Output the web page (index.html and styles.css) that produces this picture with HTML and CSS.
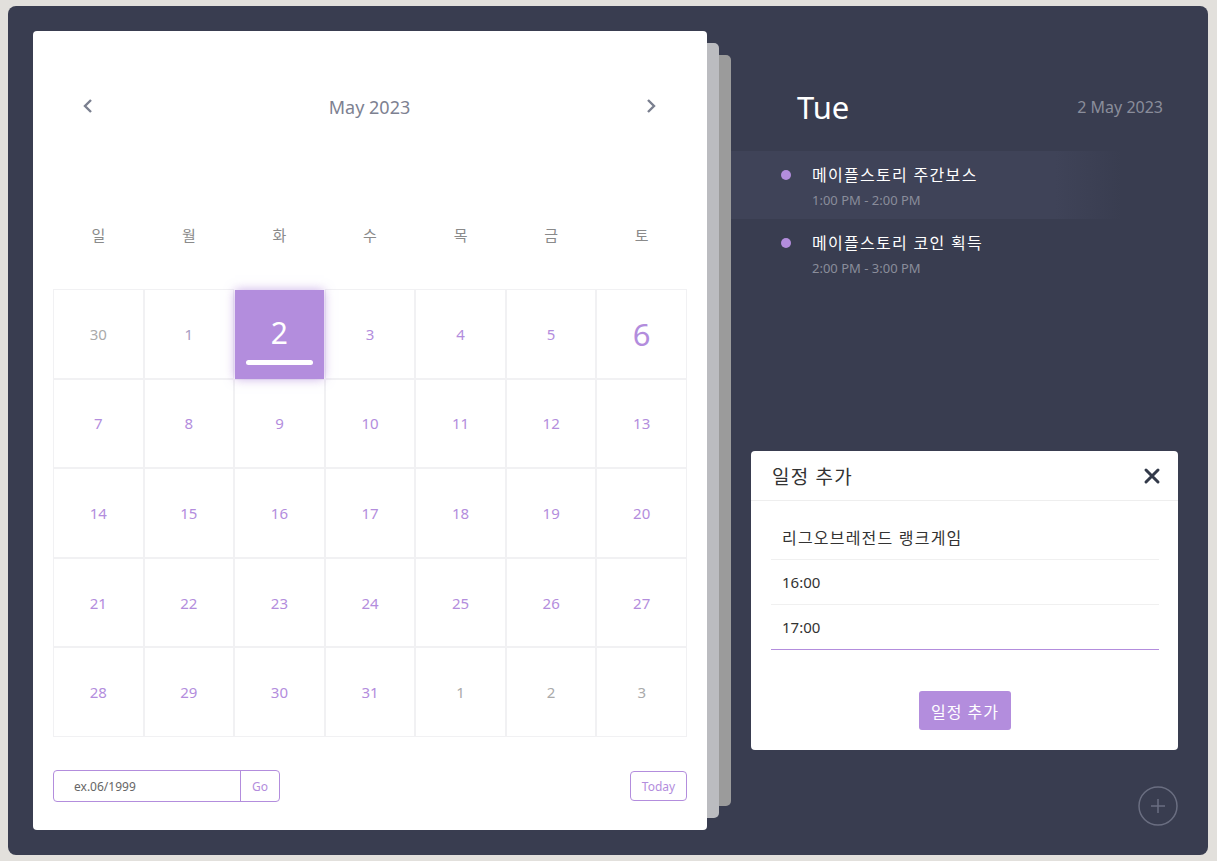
FILE: index.html
```html
<!DOCTYPE html>
<html lang="ko">
<head>
    <meta charset="UTF-8">
    <meta name="viewport" content="width=device-width, initial-scale=1.0">
    <title>Calendar</title>
    <link rel="stylesheet" href="styles.css">
</head>
<body>
    <div class="app">
        <section class="calendar">
            <div class="cal-head">
                <button class="nav-btn">
                    <svg width="12" height="16" viewBox="0 0 12 16"><path d="M9 2 L3 8 L9 14" fill="none" stroke="#7a7f8f" stroke-width="2.4"/></svg>
                </button>
                <div class="month">May 2023</div>
                <button class="nav-btn">
                    <svg width="12" height="16" viewBox="0 0 12 16"><path d="M3 2 L9 8 L3 14" fill="none" stroke="#7a7f8f" stroke-width="2.4"/></svg>
                </button>
            </div>
            <div class="weekdays">
                <span>일</span><span>월</span><span>화</span><span>수</span><span>목</span><span>금</span><span>토</span>
            </div>
            <div class="days">
                <div class="day other">30</div>
                <div class="day first">1</div>
                <div class="day active"><span>2</span><i class="bar"></i></div>
                <div class="day">3</div>
                <div class="day">4</div>
                <div class="day">5</div>
                <div class="day hover">6</div>
                <div class="day">7</div>
                <div class="day">8</div>
                <div class="day">9</div>
                <div class="day">10</div>
                <div class="day">11</div>
                <div class="day">12</div>
                <div class="day">13</div>
                <div class="day">14</div>
                <div class="day">15</div>
                <div class="day">16</div>
                <div class="day">17</div>
                <div class="day">18</div>
                <div class="day">19</div>
                <div class="day">20</div>
                <div class="day">21</div>
                <div class="day">22</div>
                <div class="day">23</div>
                <div class="day">24</div>
                <div class="day">25</div>
                <div class="day">26</div>
                <div class="day">27</div>
                <div class="day">28</div>
                <div class="day">29</div>
                <div class="day">30</div>
                <div class="day">31</div>
                <div class="day other">1</div>
                <div class="day other">2</div>
                <div class="day other">3</div>
            </div>
            <div class="cal-foot">
                <div class="goto">
                    <input type="text" placeholder="ex.06/1999">
                    <button>Go</button>
                </div>
                <button class="today-btn">Today</button>
            </div>
        </section>

        <section class="side">
            <div class="side-head">
                <div class="dayname">Tue</div>
                <div class="fulldate">2 May 2023</div>
            </div>
            <ul class="events">
                <li class="event current">
                    <i class="dot"></i>
                    <div>
                        <div class="ev-title">메이플스토리 주간보스</div>
                        <div class="ev-time">1:00 PM - 2:00 PM</div>
                    </div>
                </li>
                <li class="event">
                    <i class="dot"></i>
                    <div>
                        <div class="ev-title">메이플스토리 코인 획득</div>
                        <div class="ev-time">2:00 PM - 3:00 PM</div>
                    </div>
                </li>
            </ul>

            <div class="modal">
                <div class="modal-head">
                    <span>일정 추가</span>
                    <button class="close">
                        <svg width="18" height="18" viewBox="0 0 18 18"><path d="M3 3 L15 15 M15 3 L3 15" stroke="#333a4a" stroke-width="3" stroke-linecap="round"/></svg>
                    </button>
                </div>
                <div class="modal-body">
                    <div class="field-row"><input class="field title" type="text" value="리그오브레전드 랭크게임"></div>
                    <div class="field-row"><input class="field" type="text" value="16:00"></div>
                    <div class="field-row focus"><input class="field" type="text" value="17:00"></div>
                    <button class="add-btn">일정 추가</button>
                </div>
            </div>

            <button class="fab">
                <svg width="40" height="40" viewBox="0 0 40 40"><circle cx="20" cy="20" r="19" fill="none" stroke="#6a6e81" stroke-width="1.5"/><path d="M20 13 V27 M13 20 H27" stroke="#6a6e81" stroke-width="1.5"/></svg>
            </button>
        </section>
    </div>
</body>
</html>
```

FILE: styles.css
```css
* {
    box-sizing: border-box;
}
body {
    margin: 0;
    padding: 6px 9px 6px 8px;
    background-color: #e2e0dc;
    font-family: "Noto Sans", "Noto Sans CJK KR", sans-serif;
}
button, input {
    font-family: inherit;
}
.app {
    position: relative;
    z-index: 0;
    display: flex;
    height: 849px;
    padding: 25px 0 25px 25px;
    background-color: #393d50;
    border-radius: 8px;
}

/* calendar card, with two pages stacked behind it */
.calendar {
    position: relative;
    width: 674px;
    height: 799px;
    padding: 0 20px;
    background-color: #fff;
    border-radius: 4px;
}
.calendar::before,
.calendar::after {
    content: "";
    position: absolute;
    z-index: -1;
    border-radius: 0 5px 5px 0;
}
.calendar::before {
    top: 24px;
    bottom: 24px;
    right: -24px;
    width: 20px;
    background-color: #9b9b9b;
}
.calendar::after {
    top: 12px;
    bottom: 12px;
    right: -12px;
    width: 20px;
    background-color: #bbbcc0;
}
.cal-head {
    display: flex;
    align-items: center;
    justify-content: space-between;
    height: 24px;
    margin-top: 63px;
    padding: 0 30px 0 29px;
}
.nav-btn {
    border: none;
    background: none;
    padding: 0;
    display: flex;
    cursor: pointer;
}
.month {
    font-size: 18px;
    color: #7d8191;
    margin-top: 2px;
}
.weekdays {
    display: grid;
    grid-template-columns: repeat(7, 1fr);
    margin-top: 105px;
    line-height: 24px;
    text-align: center;
    font-size: 15px;
    color: #8a8a8a;
}
.days {
    display: grid;
    grid-template-columns: repeat(7, 1fr);
    grid-template-rows: repeat(5, 1fr);
    height: 448px;
    margin-top: 42px;
}
.day {
    display: flex;
    align-items: center;
    justify-content: center;
    border: 1px solid #f1f1f3;
    font-size: 15px;
    color: #b38ddd;
}
.day.other {
    color: #aaaaaa;
}
.day.first {
    color: #a99cc4;
}
.day.hover {
    font-size: 31px;
}
.day.active {
    position: relative;
    flex-direction: column;
    border: none;
    margin: 1px 1px 0;
    background-color: #b38ddd;
    color: #fff;
    font-size: 30px;
    box-shadow: 0 0 10px rgba(179, 141, 221, 0.7);
}
.day.active span {
    line-height: 36px;
    margin-top: -2px;
}
.day.active .bar {
    width: 67px;
    height: 5px;
    margin-top: 9px;
    margin-bottom: -14px;
    border-radius: 3px;
    background-color: #fff;
}
.cal-foot {
    display: flex;
    justify-content: space-between;
    align-items: center;
    margin-top: 33px;
    height: 32px;
}
.goto {
    display: flex;
    width: 227px;
    height: 32px;
    border: 1px solid #b38ddd;
    border-radius: 4px;
}
.goto input {
    flex: 1;
    min-width: 0;
    border: none;
    border-right: 1px solid #b38ddd;
    padding-left: 20px;
    font-size: 12px;
    outline: none;
    background: none;
}
.goto input::placeholder {
    color: #666;
}
.goto button {
    width: 38px;
    border: none;
    background: none;
    color: #b38ddd;
    font-size: 12px;
}
.today-btn {
    width: 57px;
    height: 30px;
    padding: 0;
    border: 1px solid #b38ddd;
    border-radius: 4px;
    background: #fff;
    color: #b38ddd;
    font-size: 12px;
}

/* right side */
.side {
    position: relative;
    flex: 1;
    margin-left: 24px;
}
.side-head {
    display: flex;
    justify-content: space-between;
    align-items: center;
    height: 36px;
    margin-top: 58px;
    padding: 0 45px 0 66px;
}
.dayname {
    font-size: 31px;
    color: #fff;
}
.fulldate {
    font-size: 16px;
    color: #8a8d9b;
}
.events {
    list-style: none;
    margin: 26px 0 0;
    padding: 0;
}
.event {
    display: flex;
    align-items: flex-start;
    height: 68px;
    padding: 14px 0 0 50px;
}
.event.current {
    background: linear-gradient(90deg, #3f4358 0%, #3f4358 68%, rgba(63, 67, 88, 0) 82%);
}
.dot {
    width: 10px;
    height: 10px;
    margin: 5px 21px 0 0;
    border-radius: 50%;
    background-color: #b38ddd;
}
.ev-title {
    font-size: 16px;
    line-height: 20px;
    letter-spacing: 1.3px;
    color: #fff;
}
.ev-time {
    margin-top: 7px;
    font-size: 13px;
    line-height: 16px;
    color: #8a8d9b;
}

/* add event modal */
.modal {
    position: absolute;
    top: 420px;
    left: 20px;
    width: 427px;
    height: 299px;
    background-color: #fff;
    border-radius: 4px;
}
.modal-head {
    display: flex;
    justify-content: space-between;
    align-items: center;
    height: 50px;
    padding: 0 17px 0 21px;
    border-bottom: 1px solid #eeeeee;
    font-size: 19px;
    letter-spacing: 1.2px;
    color: #333;
}
.close {
    display: flex;
    border: none;
    background: none;
    padding: 0;
}
.modal-body {
    display: flex;
    flex-direction: column;
    align-items: center;
    padding: 14px 19px 0 20px;
}
.field-row {
    width: 100%;
    height: 45px;
    border-bottom: 1px solid #f0f0f0;
}
.field-row.focus {
    border-bottom-color: #b38ddd;
}
.field {
    width: 100%;
    height: 44px;
    padding: 0 11px;
    border: none;
    background: none;
    font-size: 15px;
    color: #333;
    outline: none;
}
.field.title {
    font-size: 16px;
    letter-spacing: 1.2px;
}
.add-btn {
    width: 92px;
    height: 39px;
    margin-top: 41px;
    border: none;
    border-radius: 3px;
    background-color: #b38ddd;
    color: #fff;
    font-size: 16px;
    letter-spacing: 1px;
}
.fab {
    position: absolute;
    right: 30px;
    bottom: 4px;
    display: flex;
    padding: 0;
    border: none;
    background: none;
}
```
